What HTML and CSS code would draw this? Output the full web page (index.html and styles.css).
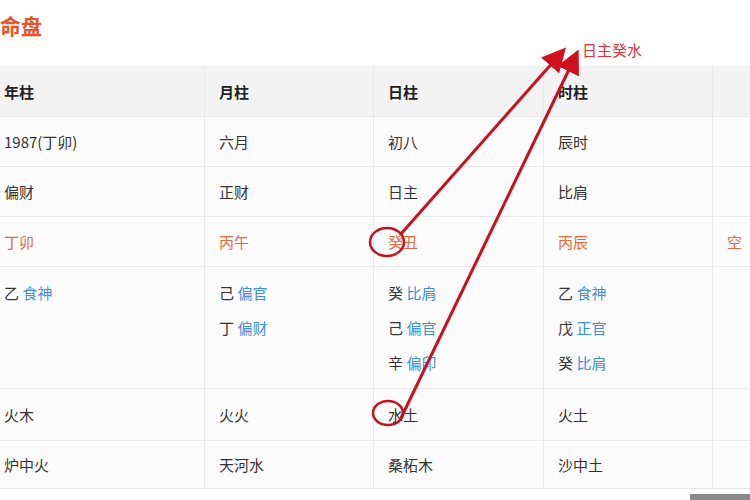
FILE: index.html
```html
<!DOCTYPE html>
<html lang="zh-CN">
<head>
    <meta charset="UTF-8">
    <title>命盘</title>
    <link rel="stylesheet" href="styles.css">
</head>
<body>
    <div class="page">
        <h2 class="title">命盘</h2>
        <table class="chart">
            <tr class="head">
                <th>年柱</th><th>月柱</th><th>日柱</th><th>时柱</th><th></th>
            </tr>
            <tr>
                <td>1987(丁卯)</td><td>六月</td><td>初八</td><td>辰时</td><td></td>
            </tr>
            <tr>
                <td>偏财</td><td>正财</td><td>日主</td><td>比肩</td><td></td>
            </tr>
            <tr class="gz">
                <td>丁卯</td><td>丙午</td><td>癸丑</td><td>丙辰</td><td>空</td>
            </tr>
            <tr class="hidden">
                <td><p>乙 <span class="god">食神</span></p></td>
                <td><p>己 <span class="god">偏官</span></p><p>丁 <span class="god">偏财</span></p></td>
                <td><p>癸 <span class="god">比肩</span></p><p>己 <span class="god">偏官</span></p><p>辛 <span class="god">偏印</span></p></td>
                <td><p>乙 <span class="god">食神</span></p><p>戊 <span class="god">正官</span></p><p>癸 <span class="god">比肩</span></p></td>
                <td></td>
            </tr>
            <tr class="r5">
                <td>火木</td><td>火火</td><td>水土</td><td>火土</td><td></td>
            </tr>
            <tr class="r6">
                <td>炉中火</td><td>天河水</td><td>桑柘木</td><td>沙中土</td><td></td>
            </tr>
        </table>

        <div class="note">日主癸水</div>

        <svg class="marks" width="750" height="500" viewBox="0 0 750 500">
            <defs>
                <marker id="head" markerWidth="8" markerHeight="8" refX="6" refY="4" orient="auto" markerUnits="strokeWidth">
                    <path d="M0,0 L8,4 L0,8 z" fill="#d0101a"/>
                </marker>
            </defs>
            <ellipse cx="387" cy="242" rx="17" ry="14" fill="none" stroke="#c8101e" stroke-width="2.5"/>
            <ellipse cx="388" cy="413" rx="15" ry="12" fill="none" stroke="#c8101e" stroke-width="2.5"/>
            <line x1="400" y1="235" x2="562" y2="52" stroke="#c8101e" stroke-width="3" marker-end="url(#head)"/>
            <line x1="401" y1="418" x2="576" y2="55" stroke="#c8101e" stroke-width="3" marker-end="url(#head)"/>
        </svg>

        <div class="scrollbar"></div>
    </div>
</body>
</html>
```

FILE: styles.css
```css
body { margin: 0; padding: 0; font-family: "Noto Sans CJK SC", "Liberation Sans", sans-serif; background: #fff; overflow: hidden; }
.page { position: relative; width: 750px; height: 500px; overflow: hidden; }
.title { margin: 0; padding: 10px 0 0 0; height: 66px; box-sizing: border-box; font-size: 21px; font-weight: bold; color: #e8532c; line-height: 30px; }
.chart { margin-left: -11px; border-collapse: collapse; table-layout: fixed; width: 893px; font-size: 15px; color: #333; }
.chart th, .chart td { border: 1px solid #e8e8e8; padding: 0 14px; text-align: left; height: 50px; box-sizing: border-box; vertical-align: middle; }
.chart th:nth-child(1), .chart td:nth-child(1) { width: 215px; }
.chart th:nth-child(2), .chart td:nth-child(2) { width: 169px; }
.chart th:nth-child(3), .chart td:nth-child(3) { width: 170px; }
.chart th:nth-child(4), .chart td:nth-child(4) { width: 169px; }
.chart th { background: #f3f3f3; font-weight: bold; color: #222; border-top-color: #ededed; }
.chart td { background: #fcfcfc; }
.gz td { color: #e8683c; }
.hidden td { height: 122px; vertical-align: top; padding-top: 8px; }
.hidden p { margin: 0; line-height: 35px; }
.god { color: #3f8fdc; }
.r5 td { height: 52px; }
.r6 td { height: 48px; }
.note { position: absolute; left: 582px; top: 39px; font-size: 15px; color: #e2303a; }
.marks { position: absolute; left: 0; top: 0; pointer-events: none; }
.scrollbar { position: absolute; left: 690px; top: 494px; width: 60px; height: 6px; background: #8a8a8a; }
```
